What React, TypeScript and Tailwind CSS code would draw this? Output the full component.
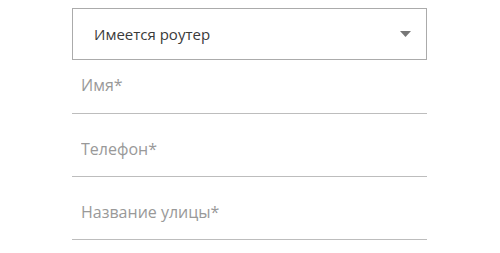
import { useState } from "react";

const fields = ["Имя*", "Телефон*", "Название улицы*"];

export default function App() {
  const [values, setValues] = useState<Record<string, string>>({});

  return (
    <div className="w-[500px] h-[253px] bg-white pt-[8px] font-['Open_Sans',sans-serif]">
      <div className="w-[355px] ml-[72px]">
        {/* селект */}
        <div className="h-[52px] border border-[#ababab] flex items-center justify-between pl-[21px] pr-[15px]">
          <span className="text-[15px] text-[#3a3a3a]">Имеется роутер</span>
          <svg width="11" height="6" viewBox="0 0 11 6">
            <path d="M0 0h11L5.5 6z" fill="#777" />
          </svg>
        </div>

        {fields.map((f, i) => (
          <div
            key={f}
            className={`border-b border-[#bdbdbd] flex items-center pb-[3px] ${i > 0 ? "mt-[10px] h-[53px]" : "h-[54px]"}`}
          >
            <input
              className="w-full pl-[9px] text-[16px] text-[#333] placeholder:text-[#999] outline-none bg-transparent"
              placeholder={f}
              value={values[f] ?? ""}
              onChange={(e) => setValues({ ...values, [f]: e.target.value })}
            />
          </div>
        ))}
      </div>
    </div>
  );
}
